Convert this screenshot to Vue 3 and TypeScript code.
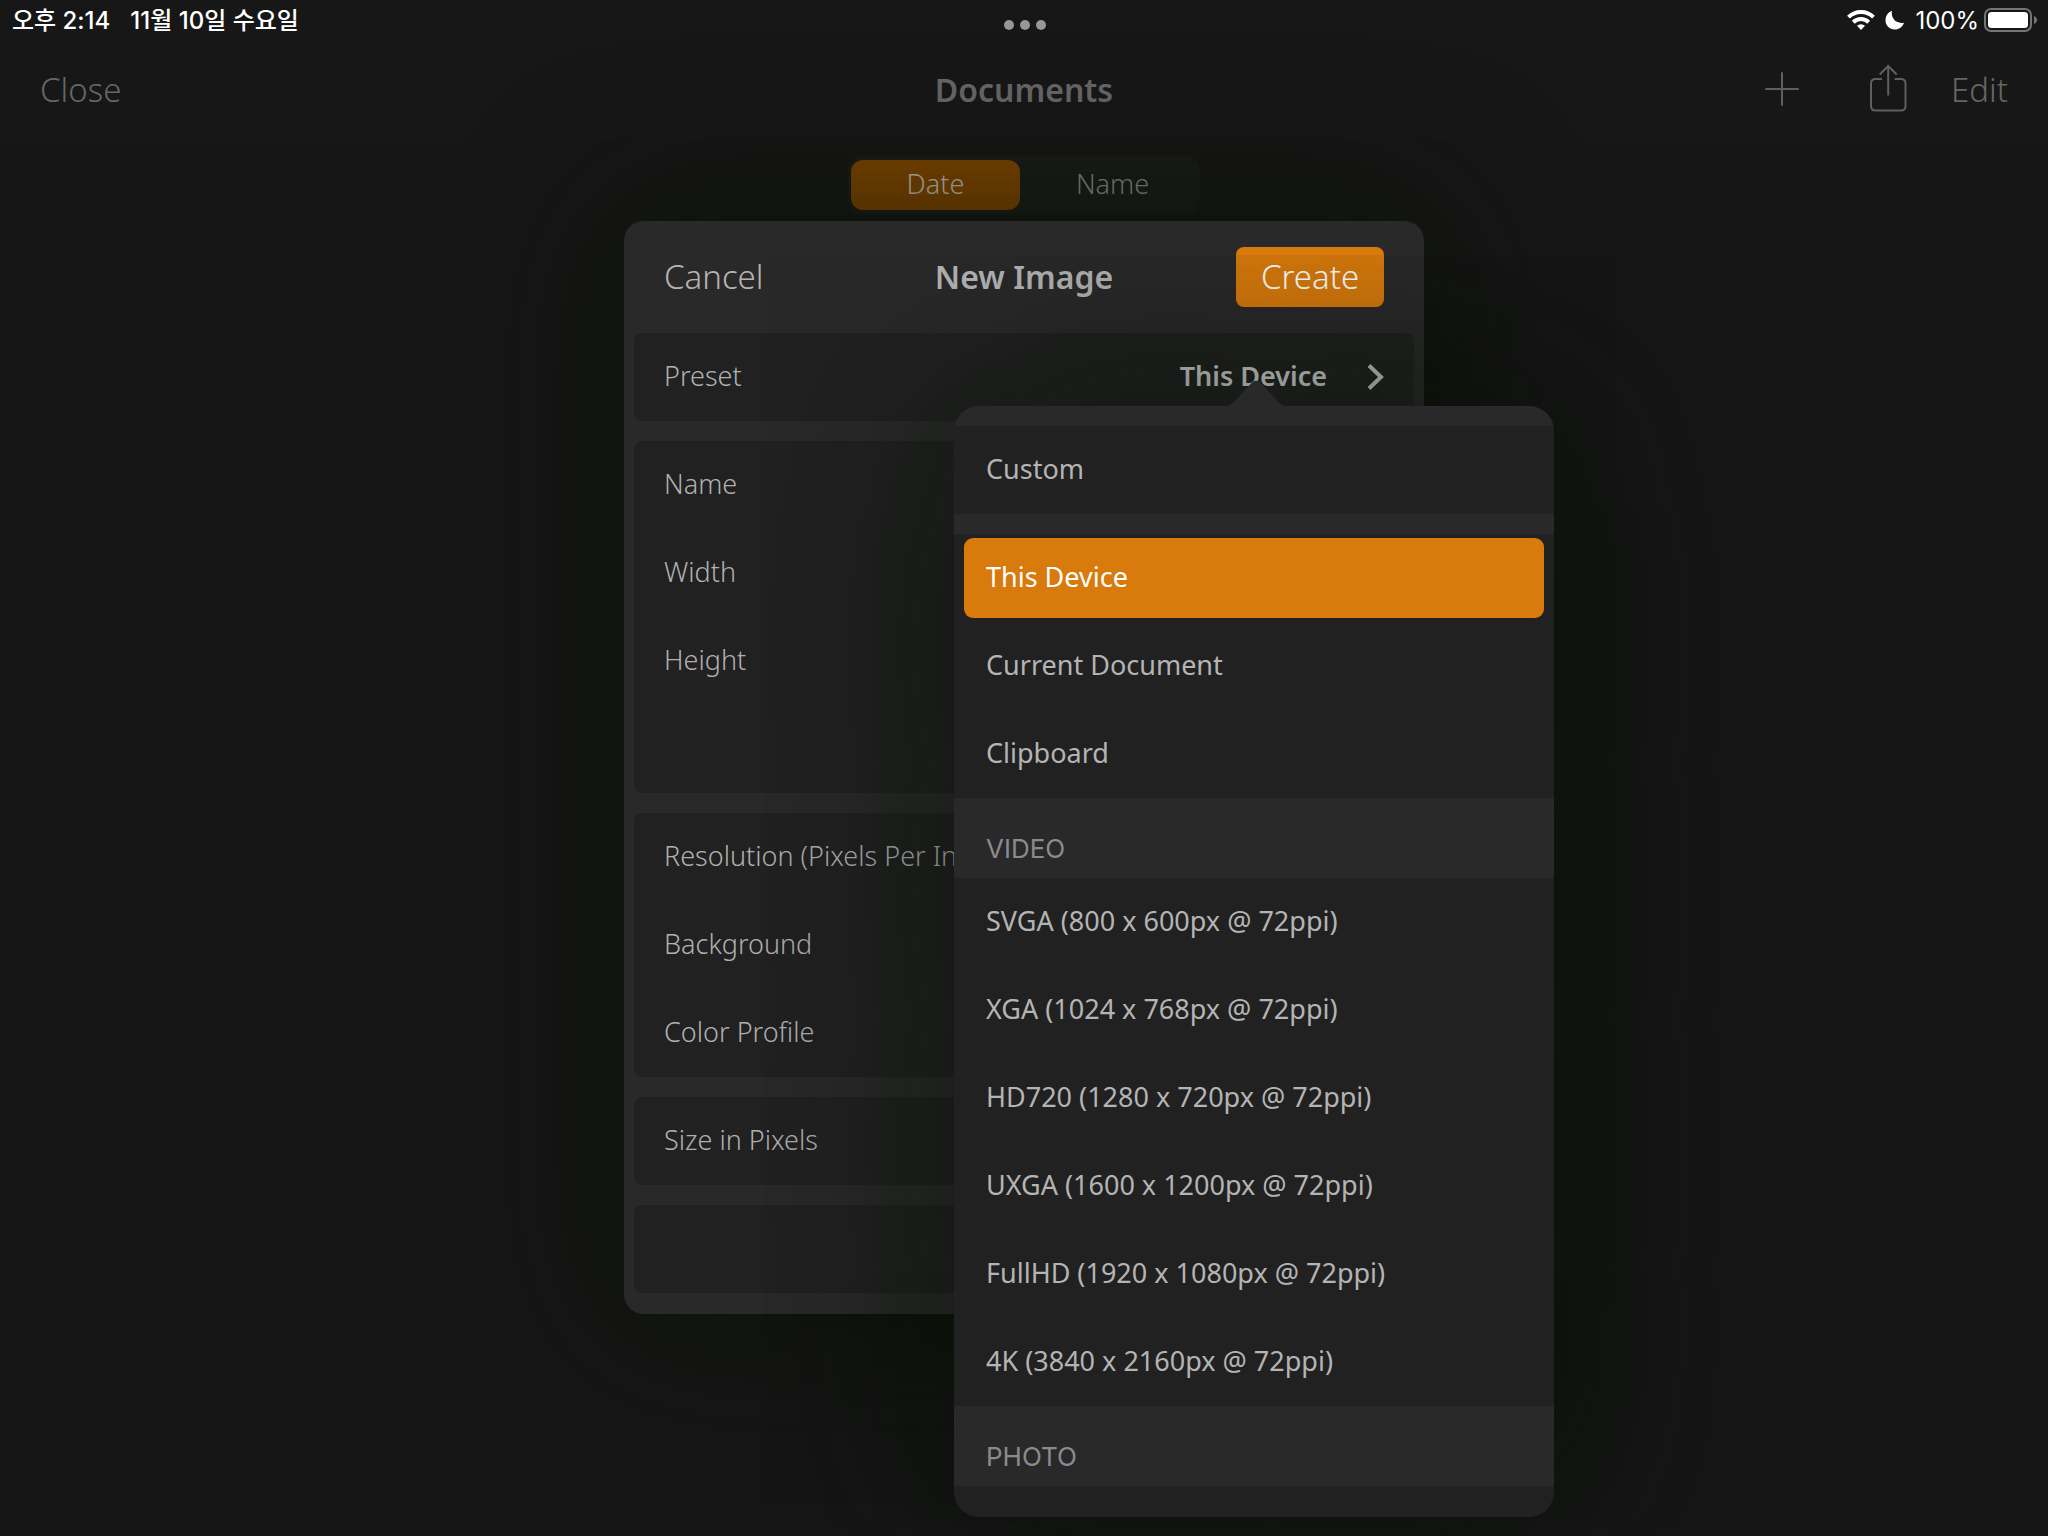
<script setup lang="ts">
import { ref } from 'vue'

interface Field {
  id: string
  label: string
}

interface PresetGroup {
  title: string
  items: string[]
}

const sortModes = ['Date', 'Name']
const sortMode = ref('Date')
const preset = ref('This Device')

const sizeFields: Field[] = [
  { id: 'name', label: 'Name' },
  { id: 'width', label: 'Width' },
  { id: 'height', label: 'Height' },
]

const outputFields: Field[] = [
  { id: 'resolution', label: 'Resolution (Pixels Per Inch)' },
  { id: 'background', label: 'Background' },
  { id: 'profile', label: 'Color Profile' },
]

const presetGroups: PresetGroup[] = [
  { title: '', items: ['Custom'] },
  { title: '', items: ['This Device', 'Current Document', 'Clipboard'] },
  {
    title: 'VIDEO',
    items: [
      'SVGA (800 x 600px @ 72ppi)',
      'XGA (1024 x 768px @ 72ppi)',
      'HD720 (1280 x 720px @ 72ppi)',
      'UXGA (1600 x 1200px @ 72ppi)',
      'FullHD (1920 x 1080px @ 72ppi)',
      '4K (3840 x 2160px @ 72ppi)',
    ],
  },
  { title: 'PHOTO', items: ['2x3 (2 x 3in @ 300ppi)'] },
]
</script>

<template>
  <div class="screen">
    <div class="top">
      <div class="status">
        <div class="status-side clock">
          <span>오후 2:14</span>
          <span>11월 10일 수요일</span>
        </div>
        <div class="dots"><i></i><i></i><i></i></div>
        <div class="status-side right">
          <svg width="28" height="22" viewBox="0 0 28 22" aria-hidden="true">
            <g fill="none" stroke="#fff" stroke-width="4">
              <path d="M1.5 8.2a17.8 17.8 0 0 1 25 0" />
              <path d="M6.3 13.2a11 11 0 0 1 15.4 0" />
            </g>
            <path d="M14 21l-4-4.200a5.800 5.800 0 0 1 8 0z" fill="#fff" />
          </svg>
          <svg width="20" height="20" viewBox="0 0 20 20" aria-hidden="true">
            <path d="M7 .8C5.600 7.500 10.500 14.300 19 12.700C17.500 17 14 19.500 9.800 19.500C4.500 19.500 .5 15.500 .5 10.300C.5 6 3 2.400 7 .8z" fill="#fff" />
          </svg>
          <span class="percent">100%</span>
          <svg width="54" height="24" viewBox="0 0 54 24" aria-hidden="true">
            <rect x="1" y="1" width="46" height="22" rx="6" fill="none" stroke="#757575" stroke-width="2" />
            <rect x="4" y="4" width="40" height="16" rx="3.500" fill="#fff" />
            <path d="M50 8c4 1.500 4 6.500 0 8z" fill="#757575" />
          </svg>
        </div>
      </div>
      <header class="nav">
        <div class="nav-side">
          <button type="button">Close</button>
        </div>
        <h1>Documents</h1>
        <div class="nav-side right">
          <button type="button" aria-label="Add">
            <svg width="34" height="34" viewBox="0 0 34 34">
              <path d="M17 1v32M1 17h32" fill="none" stroke="#5f5f5f" stroke-width="2" stroke-linecap="round" />
            </svg>
          </button>
          <button type="button" class="share" aria-label="Share">
            <svg width="38" height="48" viewBox="0 0 38 48">
              <path d="M13 15H6.500Q2 15 2 19.500V42Q2 46.500 6.500 46.500H32Q36.500 46.500 36.500 42V19.500Q36.500 15 32 15H25.500M19.200 31.500V2M10.700 10.500L19.200 2L27.700 10.500" fill="none" stroke="#5f5f5f" stroke-width="2" />
            </svg>
          </button>
          <button type="button">Edit</button>
        </div>
      </header>
    </div>

    <div class="segmented">
      <button
        v-for="mode in sortModes"
        :key="mode"
        type="button"
        :class="{ active: mode === sortMode }"
        :aria-pressed="mode === sortMode"
        @click="sortMode = mode"
      >{{ mode }}</button>
    </div>

    <div class="dialog" role="dialog" aria-labelledby="dialog-title">
      <div class="dialog-head">
        <div class="head-side"><button type="button">Cancel</button></div>
        <h2 id="dialog-title">New Image</h2>
        <div class="head-side right"><button type="button" class="create">Create</button></div>
      </div>

      <section class="group">
        <button type="button" class="row preset">
          <span>Preset</span>
          <strong>{{ preset }}</strong>
          <svg width="18" height="26" viewBox="0 0 18 26" aria-hidden="true">
            <path d="M3 1.500L15 13L3 24.500" fill="none" stroke="#c0c0be" stroke-width="4" />
          </svg>
        </button>
      </section>
      <section class="group">
        <div v-for="field in sizeFields" :key="field.id" class="row">
          <label :for="field.id">{{ field.label }}</label>
          <input :id="field.id" type="text" />
        </div>
        <div class="row"></div>
      </section>
      <section class="group">
        <div v-for="field in outputFields" :key="field.id" class="row">
          <label :for="field.id">{{ field.label }}</label>
          <input :id="field.id" type="text" />
        </div>
      </section>
      <section class="group">
        <div class="row">
          <label for="pixels">Size in Pixels</label>
          <input id="pixels" type="text" readonly />
        </div>
      </section>
      <section class="group">
        <div class="row"></div>
      </section>

      <div class="popover">
        <svg class="arrow" width="60" height="27" viewBox="0 0 60 27" aria-hidden="true">
          <path d="M0 27Q4 26 7 22.500L25.500 3Q30-1.500 34.500 3L53 22.500Q56 26 60 27z" fill="#292929" />
        </svg>
        <div class="menu">
          <section v-for="(group, index) in presetGroups" :key="index">
            <h3 :class="{ titled: group.title }">{{ group.title }}</h3>
            <ul>
              <li v-for="item in group.items" :key="item">
                <button type="button" :class="{ selected: item === preset }" @click="preset = item">{{ item }}</button>
              </li>
            </ul>
          </section>
        </div>
      </div>
    </div>
  </div>
</template>

<style>
body {
  margin: 0;
  background: #161616;
}
</style>

<style scoped>
.screen {
  position: relative;
  min-height: 100vh;
  overflow: hidden;
  background: #161616;
  color: #b4b4b4;
  font-family: "Noto Sans", "Noto Sans CJK KR", sans-serif;
  font-size: 27px;
  font-weight: 300;
}

button,
input {
  padding: 0;
  border: 0;
  background: none;
  color: inherit;
  font: inherit;
}

h1,
h2,
h3,
ul {
  margin: 0;
  padding: 0;
  list-style: none;
}

svg {
  display: block;
}

.top {
  background: #171717;
}

.status {
  display: flex;
  align-items: center;
  height: 40px;
  padding: 0 10px 0 12px;
  color: #fff;
  font-family: Inter, "Noto Sans CJK KR", sans-serif;
  font-size: 24px;
  font-weight: 500;
}

.status-side {
  display: flex;
  flex: 1;
  align-items: center;
  gap: 20px;
}

.clock {
  padding-bottom: 4px;
}

.status-side.right {
  justify-content: flex-end;
  gap: 10px;
}

.percent {
  margin-right: -5px;
  font-weight: 400;
}

.dots {
  display: flex;
  gap: 6px;
  padding-top: 10px;
}

.dots i {
  width: 10px;
  height: 10px;
  border-radius: 50%;
  background: #969696;
}

.nav {
  display: flex;
  align-items: center;
  height: 100px;
  padding: 0 40px;
  color: #666;
  font-size: 33px;
}

.nav h1,
.nav-side button {
  padding-bottom: 2px;
}

.nav h1 {
  font-size: 32px;
  font-weight: 600;
}

.nav-side {
  display: flex;
  flex: 1;
  align-items: center;
}

.nav-side.right {
  justify-content: flex-end;
}

.share {
  margin: 0 44px 2px 70px;
}

.segmented {
  display: flex;
  box-sizing: border-box;
  gap: 8px;
  width: 352px;
  margin: 16px auto 0;
  padding: 4px 3px;
  border-radius: 14px;
  background: #191b19;
}

.segmented button {
  flex: 1;
  height: 50px;
  padding-bottom: 4px;
  border-radius: 12px;
  color: #858682;
}

.segmented button.active {
  background: #7c4400;
  color: #c0b8ac;
}

.dialog {
  position: absolute;
  top: 221px;
  left: 50%;
  box-sizing: border-box;
  width: 800px;
  margin-left: -400px;
  padding: 0 10px 21px;
  border-radius: 20px;
  background: #292929;
  box-shadow: 0 0 160px rgba(8, 16, 0, 0.75);
}

.dialog-head {
  display: flex;
  align-items: center;
  height: 112px;
  padding: 0 30px;
  font-size: 33px;
}

.dialog-head h2,
.dialog-head button {
  padding-bottom: 2px;
}

.dialog-head h2 {
  font-size: 32px;
  font-weight: 600;
}

.head-side {
  display: flex;
  flex: 1;
}

.head-side.right {
  justify-content: flex-end;
}

.create {
  width: 148px;
  height: 60px;
  border-radius: 8px;
  background: #d87a0c;
  color: #fff;
}

.group {
  border-radius: 8px;
  background: #212121;
  color: #b0b0b0;
}

.group + .group {
  margin-top: 20px;
}

.row {
  display: flex;
  align-items: center;
  box-sizing: border-box;
  width: 100%;
  height: 88px;
  padding: 0 30px;
}

.row label,
.preset span,
.preset strong {
  padding-bottom: 4px;
}

.row input {
  flex: 1;
  min-width: 0;
  text-align: right;
}

.preset {
  text-align: left;
}

.preset strong {
  flex: 1;
  color: #c8c8c6;
  font-weight: 600;
  text-align: right;
}

.preset svg {
  margin-left: 39px;
}

.popover {
  position: absolute;
  top: 185px;
  left: 330px;
  width: 600px;
  border-radius: 25px;
  box-shadow: 0 0 220px rgba(4, 12, 0, 0.8);
}

.arrow {
  position: absolute;
  top: -26px;
  left: 272px;
}

.menu {
  max-height: calc(100vh - 425px);
  overflow: hidden;
  border-radius: 25px;
  background: #212121;
  font-weight: 400;
}

.menu h3 {
  height: 20px;
  background: #292929;
}

.menu h3.titled {
  box-sizing: border-box;
  height: 80px;
  padding: 35px 32px 0;
  color: #8a8a8f;
  font-family: Inter, sans-serif;
  font-size: 26px;
  font-weight: 400;
  line-height: 32px;
}

.menu li {
  padding: 4px 10px;
}

.menu button {
  display: block;
  width: 100%;
  height: 80px;
  padding: 0 22px 4px;
  border-radius: 9px;
  text-align: left;
}

.menu .selected {
  background: #d87a0c;
  color: #fff;
}
</style>
